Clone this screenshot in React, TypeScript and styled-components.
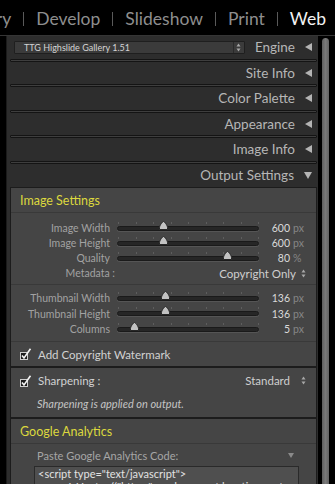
import React from 'react'
import styled, { createGlobalStyle } from 'styled-components'

const GlobalStyle = createGlobalStyle`
  html, body {
    margin: 0;
    padding: 0;
    background: #000;
  }
  body {
    width: 335px;
    height: 484px;
    overflow: hidden;
    font-family: Lato, 'Open Sans', sans-serif;
  }
`

const Screen = styled.div`
  width: 335px;
  height: 484px;
  display: flex;
  flex-direction: column;
  background: #000;
  overflow: hidden;
`

const ModuleBar = styled.div`
  height: 36px;
  flex: none;
  display: flex;
  align-items: center;
  justify-content: flex-end;
  gap: 12px;
  padding: 2px 9px 0 0;
  box-sizing: border-box;
  overflow: hidden;
  border-bottom: 1px solid #353535;
`

const ModuleName = styled.span<{ $active?: boolean }>`
  flex: none;
  font-size: 17.5px;
  color: ${p => (p.$active ? '#f2f2f2' : '#8e8e8e')};
  white-space: nowrap;
`

const ModuleSep = styled.span`
  flex: none;
  width: 1px;
  height: 14px;
  background: #5a5a5a;
`

const Body = styled.div`
  flex: 1;
  display: flex;
  min-height: 0;
`

const Panel = styled.div`
  margin-left: 6px;
  width: 312px;
  flex: none;
  background: #2d2d2d;
  border-left: 1px solid #1b1b1b;
  box-sizing: border-box;
  overflow: hidden;
`

const ScrollTrack = styled.div`
  margin-left: 4px;
  width: 7px;
  padding-top: 2px;
`

const ScrollThumb = styled.div`
  height: 100%;
  border-radius: 4px 4px 0 0;
  background: linear-gradient(90deg, #5f5f5f, #7a7a7a 50%, #646464);
`

const HeaderRow = styled.div<{ $last?: boolean }>`
  height: ${p => (p.$last ? '23.5px' : '22.5px')};
  display: flex;
  align-items: center;
  justify-content: flex-end;
  gap: 10px;
  padding: 0 6px 0 7px;
`

const HeaderTitle = styled.span`
  font-size: 13.5px;
  color: #b6b6b6;
  white-space: nowrap;
`

const Collapsed = styled.span`
  width: 0;
  height: 0;
  border-top: 4px solid transparent;
  border-bottom: 4px solid transparent;
  border-right: 7px solid #b4b4b4;
`

const Expanded = styled.span`
  width: 0;
  height: 0;
  border-left: 4px solid transparent;
  border-right: 4px solid transparent;
  border-top: 7px solid #b4b4b4;
`

const Rim = styled.div`
  height: 3px;
  margin: 0 1px 0 3px;
  box-sizing: border-box;
  border: 1px solid #141414;
  border-radius: 1px;
  background: #3e3e3e;
`

const EngineSelect = styled.div`
  margin-right: auto;
  width: 231px;
  height: 13px;
  box-sizing: border-box;
  display: flex;
  align-items: center;
  background: #3b3b3b;
  border: 1px solid #1f1f1f;
  border-radius: 1px;
  padding-left: 9px;
  font-size: 9px;
  color: #d4d4d4;
`

const SelectText = styled.span`
  flex: 1;
  white-space: nowrap;
`

const SelectArrows = styled.span`
  width: 10px;
  height: 100%;
  display: flex;
  align-items: center;
  justify-content: center;
  border-left: 1px solid #2a2a2a;
`

const Box = styled.div`
  margin: 0 1px 0 3px;
  background: #454545;
  border: 1px solid #1c1c1c;
`

const SectionHead = styled.div`
  height: 24px;
  display: flex;
  align-items: center;
  padding-left: 9px;
  font-size: 12.5px;
  color: #dcd83e;
  border-bottom: 1px solid #393939;
`

const Group = styled.div<{ $pt: number; $pb: number; $line?: boolean }>`
  padding: ${p => p.$pt}px 0 ${p => p.$pb}px;
  border-bottom: ${p => (p.$line ? '1px solid #393939' : 'none')};
`

const SliderRow = styled.div<{ $h: number }>`
  height: ${p => p.$h}px;
  display: grid;
  grid-template-columns: 106px 142px 31px 1fr;
  align-items: center;
  font-size: 10.5px;
`

const Label = styled.span`
  text-align: right;
  padding-right: 7px;
  color: #a2a2a2;
  white-space: nowrap;
`

const Value = styled.span`
  text-align: right;
  color: #dadada;
`

const Unit = styled.span`
  padding-left: 3px;
  color: #858585;
`

const Track = styled.div`
  position: relative;
  height: 5px;
  box-sizing: border-box;
  border-radius: 3px;
  background: #262626;
  border: 1px solid #1a1a1a;
  box-shadow: 0 1px 0 #555;
`

const Tick = styled.span`
  position: absolute;
  top: -5px;
  width: 1px;
  height: 2px;
  background: #5e5e5e;
`

const Thumb = styled.svg`
  position: absolute;
  top: -6px;
  margin-left: -4.5px;
`

const ChoiceRow = styled.div<{ $h: number }>`
  height: ${p => p.$h}px;
  display: flex;
  align-items: center;
  font-size: 10.5px;
  padding-right: 10px;
`

const ChoiceLabel = styled.span<{ $w: number }>`
  width: ${p => p.$w}px;
  text-align: right;
  color: #a2a2a2;
`

const ChoiceValue = styled.span`
  margin-left: auto;
  margin-right: 5px;
  color: #cfcfcf;
  font-size: 11.5px;
`

const CheckRow = styled.div<{ $h: number }>`
  height: ${p => p.$h}px;
  display: flex;
  align-items: center;
  padding: 0 10px 0 9px;
  gap: 6px;
  font-size: 11.5px;
  color: #d2d2d2;
`

const Note = styled.div`
  height: 20px;
  display: flex;
  align-items: center;
  padding-left: 26px;
  font-size: 11px;
  font-style: italic;
  color: #c4c4c4;
`

const PasteRow = styled.div`
  height: 21px;
  display: flex;
  align-items: center;
  justify-content: space-between;
  padding: 1px 22px 0 26px;
  font-size: 11px;
  color: #a6a6a6;
`

const SmallDown = styled.span`
  width: 0;
  height: 0;
  border-left: 3.5px solid transparent;
  border-right: 3.5px solid transparent;
  border-top: 5px solid #8a8a8a;
`

const CodeArea = styled.div`
  margin: 0 17px 0 23px;
  padding: 0 3px;
  height: 40px;
  background: #4f4f4f;
  border: 1px solid #2a2a2a;
  font-size: 11px;
  line-height: 13px;
  color: #e2e2e2;
  white-space: nowrap;
  overflow: hidden;
`

const UpDown = () => (
  <svg width="5" height="9" viewBox="0 0 5 9">
    <path d="M2.5 0.5 L4.5 3.5 L0.5 3.5 Z" fill="#a8a8a8" />
    <path d="M2.5 8.5 L4.5 5.5 L0.5 5.5 Z" fill="#a8a8a8" />
  </svg>
)

const CheckBox = () => (
  <svg width="12" height="12" viewBox="0 0 12 12">
    <rect x="0.5" y="4.5" width="7" height="7" fill="#1c1c1c" stroke="#cfcfcf" />
    <path d="M2 7.5 L4 10 L10.5 0.8" fill="none" stroke="#f4f4f4" strokeWidth="1.6" />
  </svg>
)

const Slider = ({ label, value, unit, pos }: { label: string; value: string; unit: string; pos: number }) => (
  <>
    <Label>{label}</Label>
    <Track>
      {Array.from({ length: 9 }).map((_, i) => (
        <Tick key={i} style={{ left: `${(i / 8) * 100}%` }} />
      ))}
      <Thumb width="9" height="9" viewBox="0 0 9 9" style={{ left: `${pos * 100}%` }}>
        <path
          d="M4.5 0.5 C5.6 0.5 8.5 4.6 8.5 6.6 L8.5 8.5 L0.5 8.5 L0.5 6.6 C0.5 4.6 3.4 0.5 4.5 0.5 Z"
          fill="#c2c2c2"
          stroke="#262626"
        />
      </Thumb>
    </Track>
    <Value>{value}</Value>
    <Unit>{unit}</Unit>
  </>
)

const headers = ['Site Info', 'Color Palette', 'Appearance', 'Image Info']

const App = () => (
  <Screen>
    <GlobalStyle />
    <ModuleBar>
      <ModuleName>Library</ModuleName>
      <ModuleSep />
      <ModuleName>Develop</ModuleName>
      <ModuleSep />
      <ModuleName>Slideshow</ModuleName>
      <ModuleSep />
      <ModuleName>Print</ModuleName>
      <ModuleSep />
      <ModuleName $active>Web</ModuleName>
    </ModuleBar>
    <Body>
      <Panel>
        <HeaderRow>
          <EngineSelect>
            <SelectText>TTG Highslide Gallery 1.51</SelectText>
            <SelectArrows>
              <UpDown />
            </SelectArrows>
          </EngineSelect>
          <HeaderTitle>Engine</HeaderTitle>
          <Collapsed />
        </HeaderRow>
        <Rim />
        {headers.map(h => (
          <React.Fragment key={h}>
            <HeaderRow>
              <HeaderTitle>{h}</HeaderTitle>
              <Collapsed />
            </HeaderRow>
            <Rim />
          </React.Fragment>
        ))}
        <HeaderRow $last>
          <HeaderTitle>Output Settings</HeaderTitle>
          <Expanded />
        </HeaderRow>

        <Box>
          <SectionHead>Image Settings</SectionHead>
          <Group $pt={7.5} $pb={3} $line>
            <SliderRow $h={15}>
              <Slider label="Image Width" value="600" unit="px" pos={0.324} />
            </SliderRow>
            <SliderRow $h={15}>
              <Slider label="Image Height" value="600" unit="px" pos={0.324} />
            </SliderRow>
            <SliderRow $h={15}>
              <Slider label="Quality" value="80" unit="%" pos={0.78} />
            </SliderRow>
            <ChoiceRow $h={15}>
              <ChoiceLabel $w={104}>Metadata :</ChoiceLabel>
              <ChoiceValue>Copyright Only</ChoiceValue>
              <UpDown />
            </ChoiceRow>
          </Group>
          <Group $pt={6} $pb={4} $line>
            <SliderRow $h={15.5}>
              <Slider label="Thumbnail Width" value="136" unit="px" pos={0.338} />
            </SliderRow>
            <SliderRow $h={15.5}>
              <Slider label="Thumbnail Height" value="136" unit="px" pos={0.338} />
            </SliderRow>
            <SliderRow $h={15.5}>
              <Slider label="Columns" value="5" unit="px" pos={0.12} />
            </SliderRow>
          </Group>
          <CheckRow $h={24}>
            <CheckBox />
            Add Copyright Watermark
          </CheckRow>
        </Box>

        <Box>
          <CheckRow $h={25}>
            <CheckBox />
            Sharpening :
            <ChoiceValue>Standard</ChoiceValue>
            <UpDown />
          </CheckRow>
          <Note>Sharpening is applied on output.</Note>
          <Group $pt={4} $pb={0} />
        </Box>

        <Box>
          <SectionHead>Google Analytics</SectionHead>
          <PasteRow>
            Paste Google Analytics Code:
            <SmallDown />
          </PasteRow>
          <CodeArea>
            {'<script type="text/javascript">'}
            <br />
            {'var gaJsHost = (("https:" == document.location.protocol) ?'}
          </CodeArea>
        </Box>
      </Panel>
      <ScrollTrack>
        <ScrollThumb />
      </ScrollTrack>
    </Body>
  </Screen>
)

export default App
